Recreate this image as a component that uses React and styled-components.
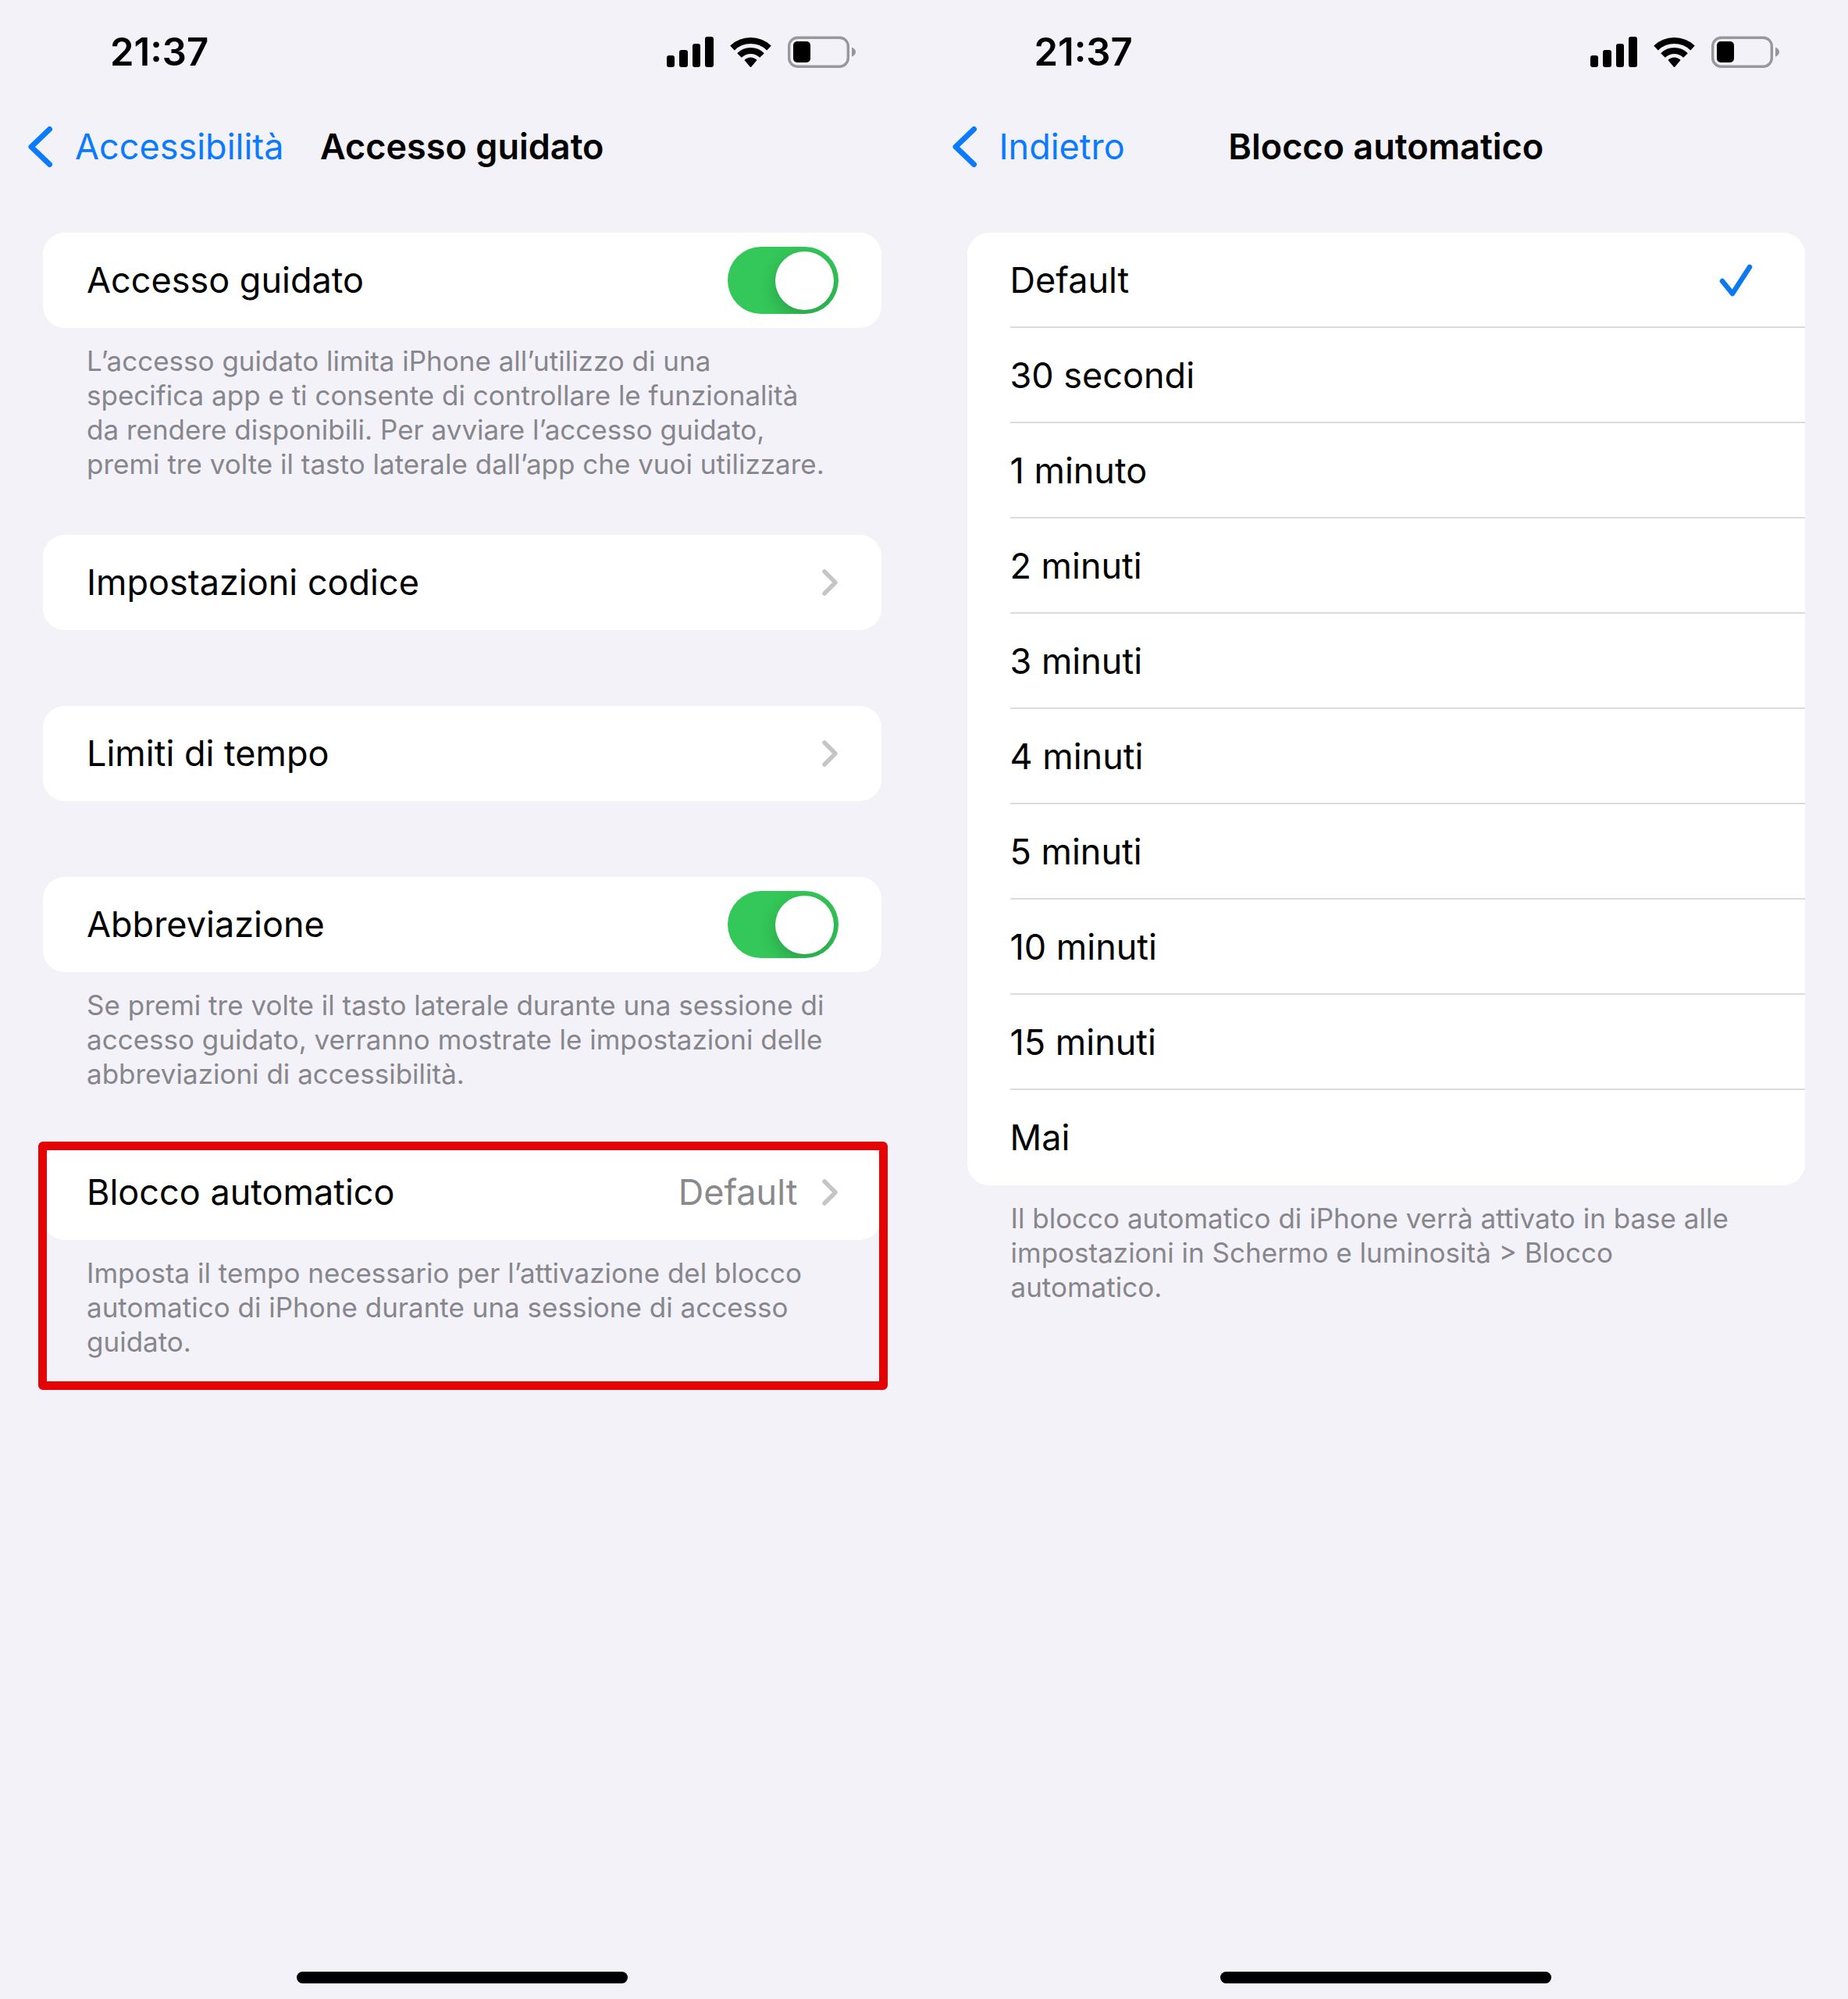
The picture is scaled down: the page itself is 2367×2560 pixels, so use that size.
import React, { useState } from 'react';
import styled, { createGlobalStyle, css } from 'styled-components';

const GlobalStyle = createGlobalStyle`
  *, *::before, *::after {
    box-sizing: border-box;
  }

  body {
    margin: 0;
    background: #f3f2f9;
    color: #000;
    font-family: Inter, "Liberation Sans", sans-serif;
    font-size: 45px;
    line-height: 56px;
  }

  button, input {
    font: inherit;
    color: inherit;
  }
`;

const Screens = styled.div`
  display: grid;
  grid-template-columns: 1fr 1fr;
  min-height: 100vh;
`;

const Screen = styled.section`
  display: flex;
  flex-direction: column;
  min-width: 0;
  padding: 36px 0 20px;
`;

const StatusBar = styled.div`
  display: flex;
  align-items: center;
  justify-content: space-between;
  height: 62px;
  padding: 0 87px 0 141px;
`;

const Time = styled.time`
  font-size: 49px;
  font-weight: 600;
`;

const NavBar = styled.header`
  display: grid;
  grid-template-columns: 1fr auto 1fr;
  align-items: center;
  height: 90px;
  margin-top: 45px;
  margin-bottom: 65px;
  padding: 0 35px;
`;

const BackLink = styled.a`
  display: flex;
  align-items: center;
  gap: 28px;
  color: #0a7aff;
  text-decoration: none;
  white-space: nowrap;
`;

const Title = styled.h1`
  margin: 0;
  font-size: 45px;
  font-weight: 600;
  white-space: nowrap;
`;

const Content = styled.main`
  display: flex;
  flex-direction: column;
  gap: 67px;
  padding: 0 55px;
`;

const Group = styled.section`
  position: relative;
  margin-bottom: ${props => props.$plain ? '30px' : '0'};

  ${props => props.$highlighted && css`
    &::after {
      content: "";
      position: absolute;
      inset: -4px -8px -38px -6px;
      border: 11px solid #e40404;
      border-radius: 6px;
      pointer-events: none;
    }
  `}
`;

const Card = styled.div`
  overflow: hidden;
  border-radius: 28px;
  background: #fff;
`;

const rowStyle = css`
  display: flex;
  align-items: center;
  width: 100%;
  min-height: 122px;
  padding: 0 55px 0 56px;
  text-align: left;
`;

const LabelRow = styled.label`
  ${rowStyle}
`;

const ButtonRow = styled.button`
  ${rowStyle}
  border: 0;
  background: none;
`;

const RowText = styled.span`
  flex: 1;
`;

const RowValue = styled.span`
  margin-right: 31px;
  color: #8a8a8c;
`;

const Footnote = styled.p`
  margin: 0;
  padding: 20px 66px 2px 56px;
  color: #87868c;
  font-size: 35px;
  line-height: 44px;
`;

const Switch = styled.input`
  appearance: none;
  width: 142px;
  height: 86px;
  margin: 0;
  padding: 6px;
  overflow: hidden;
  border-radius: 43px;
  background: #e9e9eb;

  &::before {
    content: "";
    display: block;
    width: 75px;
    height: 75px;
    border-radius: 50%;
    background: #fff;
    box-shadow: 0 8px 22px rgba(0, 0, 0, 0.2);
  }

  &:checked {
    background: #34c759;
  }

  &:checked::before {
    margin-left: auto;
  }
`;

const OptionList = styled.fieldset`
  min-width: 0;
  margin: 0;
  padding: 0;
  border: 0;
`;

const Option = styled.label`
  display: flex;
  align-items: center;
  height: 122px;
  margin-left: 55px;
  padding: 2px 67px 0 0;
  border-bottom: 2px solid #dcdcde;

  &:last-child {
    border-bottom-color: transparent;
  }
`;

const Radio = styled.input`
  appearance: none;
  width: 1px;
  height: 1px;
  margin: 0;
`;

const CheckSvg = styled.svg`
  visibility: hidden;

  ${Radio}:checked + & {
    visibility: visible;
  }
`;

const HomeIndicator = styled.div`
  width: 424px;
  height: 15px;
  margin: auto auto 0;
  border-radius: 8px;
  background: #000;
`;

const StatusIcons = () => (
  <svg width="244" height="42" viewBox="0 0 244 42" aria-hidden="true">
    <rect x="1" y="25" width="10" height="15" rx="3" />
    <rect x="17" y="18" width="11" height="22" rx="3" />
    <rect x="34" y="10" width="10" height="30" rx="3" />
    <rect x="50" y="1" width="11" height="39" rx="3" />
    <g fill="none" stroke="#000" strokeWidth="8">
      <path d="M85 15.500A34 34 0 0 1 132 15.500" />
      <path d="M94 25A20.500 20.500 0 0 1 123 25" />
    </g>
    <path d="M108.500 27.500C111.500 27.500 114.400 28.700 116.500 31L109.600 39.300Q108.500 40.500 107.400 39.300L100.500 31C102.600 28.700 105.500 27.500 108.500 27.500Z" />
    <rect x="157.700" y="2.200" width="75.600" height="37" rx="11" fill="none" stroke="#98979d" strokeWidth="3.400" />
    <rect x="163" y="7" width="22" height="27" rx="5" />
    <path d="M238 14.500Q243 16.500 243 20.500T238 26.500Z" fill="#98979d" />
  </svg>
);

const BackIcon = () => (
  <svg width="33" height="54" viewBox="0 0 33 54" fill="none" stroke="#0a7aff" strokeWidth="7" strokeLinecap="round" strokeLinejoin="round" aria-hidden="true">
    <path d="M28.500 4.500L5 27L28.500 49.500" />
  </svg>
);

const ChevronIcon = () => (
  <svg width="21" height="36" viewBox="0 0 21 36" fill="none" stroke="#c5c5c7" strokeWidth="5.500" strokeLinecap="round" strokeLinejoin="round" aria-hidden="true">
    <path d="M3 4L17 18L3 32" />
  </svg>
);

const CheckIcon = () => (
  <CheckSvg width="43" height="42" viewBox="0 0 43 42" fill="none" stroke="#0a7aee" strokeWidth="6.500" strokeLinecap="round" strokeLinejoin="round" aria-hidden="true">
    <path d="M4 22L17 38L39 4" />
  </CheckSvg>
);

const PhoneScreen = ({ back, title, children }) => (
  <Screen>
    <StatusBar>
      <Time>21:37</Time>
      <StatusIcons />
    </StatusBar>
    <NavBar>
      <BackLink href="#"><BackIcon />{back}</BackLink>
      <Title>{title}</Title>
    </NavBar>
    <Content>{children}</Content>
    <HomeIndicator />
  </Screen>
);

const SwitchRow = ({ label, checked, onChange }) => (
  <Card>
    <LabelRow>
      <RowText>{label}</RowText>
      <Switch type="checkbox" role="switch" checked={checked} onChange={e => onChange(e.target.checked)} />
    </LabelRow>
  </Card>
);

const LinkRow = ({ label, value }) => (
  <Card>
    <ButtonRow type="button">
      <RowText>{label}</RowText>
      {value && <RowValue>{value}</RowValue>}
      <ChevronIcon />
    </ButtonRow>
  </Card>
);

const lockTimes = [
  'Default',
  '30 secondi',
  '1 minuto',
  '2 minuti',
  '3 minuti',
  '4 minuti',
  '5 minuti',
  '10 minuti',
  '15 minuti',
  'Mai',
];

const App = () => {
  const [guidedAccess, setGuidedAccess] = useState(true);
  const [shortcut, setShortcut] = useState(true);
  const [lockTime, setLockTime] = useState('Default');

  return (
    <>
      <GlobalStyle />
      <Screens>
        <PhoneScreen back="Accessibilità" title="Accesso guidato">
          <Group>
            <SwitchRow label="Accesso guidato" checked={guidedAccess} onChange={setGuidedAccess} />
            <Footnote>
              L’accesso guidato limita iPhone all’utilizzo di una specifica app e ti consente di
              controllare le funzionalità da rendere disponibili. Per avviare l’accesso guidato,
              premi tre volte il tasto laterale dall’app che vuoi utilizzare.
            </Footnote>
          </Group>
          <Group $plain>
            <LinkRow label="Impostazioni codice" />
          </Group>
          <Group $plain>
            <LinkRow label="Limiti di tempo" />
          </Group>
          <Group>
            <SwitchRow label="Abbreviazione" checked={shortcut} onChange={setShortcut} />
            <Footnote>
              Se premi tre volte il tasto laterale durante una sessione di accesso guidato, verranno
              mostrate le impostazioni delle abbreviazioni di accessibilità.
            </Footnote>
          </Group>
          <Group $highlighted>
            <LinkRow label="Blocco automatico" value={lockTime} />
            <Footnote>
              Imposta il tempo necessario per l’attivazione del blocco automatico di iPhone durante
              una sessione di accesso guidato.
            </Footnote>
          </Group>
        </PhoneScreen>

        <PhoneScreen back="Indietro" title="Blocco automatico">
          <Group>
            <Card>
              <OptionList aria-label="Blocco automatico">
                {lockTimes.map(time => (
                  <Option key={time}>
                    <RowText>{time}</RowText>
                    <Radio type="radio" name="lock-time" checked={lockTime === time} onChange={() => setLockTime(time)} />
                    <CheckIcon />
                  </Option>
                ))}
              </OptionList>
            </Card>
            <Footnote>
              Il blocco automatico di iPhone verrà attivato in base alle impostazioni in Schermo e
              luminosità &gt; Blocco automatico.
            </Footnote>
          </Group>
        </PhoneScreen>
      </Screens>
    </>
  );
};

export default App;
